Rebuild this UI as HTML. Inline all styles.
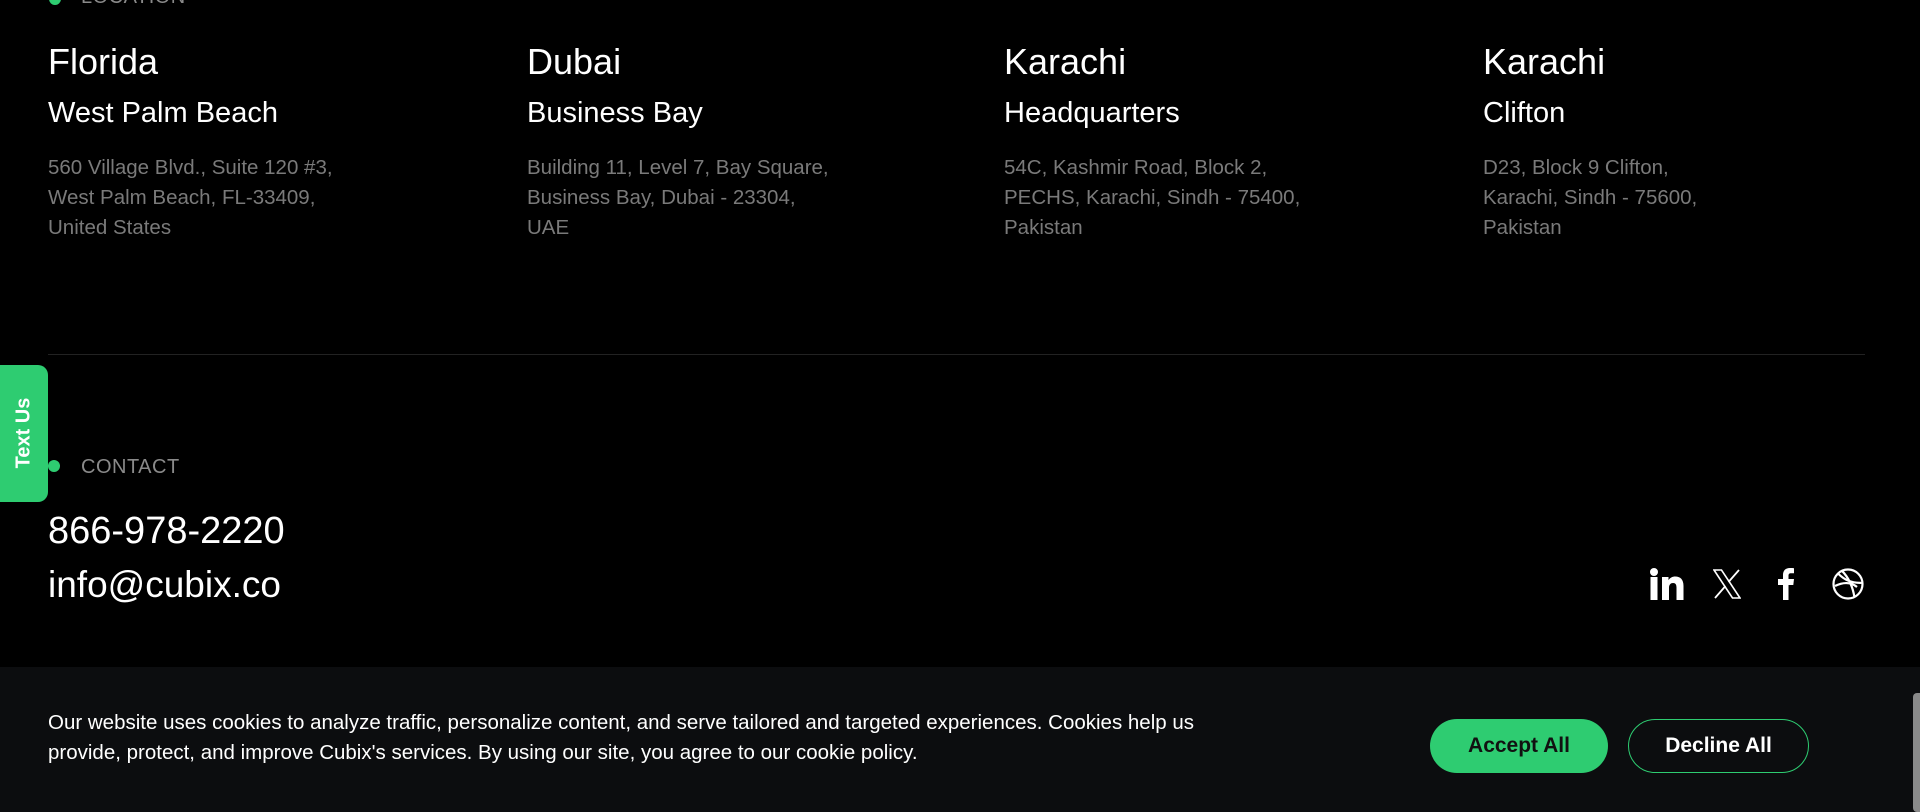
<!DOCTYPE html>
<html><head><meta charset="utf-8"><style>
*{margin:0;padding:0;box-sizing:border-box}
body{width:1920px;height:812px;background:#000;font-family:"Liberation Sans",sans-serif;color:#fff;position:relative;overflow:hidden}
.abs{position:absolute}
.lbl{font-size:20px;color:#8a8a8a;letter-spacing:.5px}
.dot{width:12px;height:12px;border-radius:50%;background:#2ecc71}
.col{position:absolute;top:39px}
.col h2{font-size:36px;font-weight:400;line-height:46px}
.col h3{font-size:29px;font-weight:400;line-height:40px;margin-top:8px}
.col p{font-size:20.5px;color:#7a7a7a;line-height:30px;margin-top:20px}
.btn{position:absolute;top:719px;height:54px;border-radius:27px;font-size:21px;font-weight:700;display:flex;align-items:center;justify-content:center}
</style></head><body>
<div class="abs dot" style="left:49px;top:-7px"></div>
<div class="abs lbl" style="left:81px;top:-14px">LOCATION</div>

<div class="col" style="left:48px"><h2>Florida</h2><h3>West Palm Beach</h3><p>560 Village Blvd., Suite 120 #3,<br>West Palm Beach, FL-33409,<br>United States</p></div>
<div class="col" style="left:527px"><h2>Dubai</h2><h3>Business Bay</h3><p>Building 11, Level 7, Bay Square,<br>Business Bay, Dubai - 23304,<br>UAE</p></div>
<div class="col" style="left:1004px"><h2>Karachi</h2><h3>Headquarters</h3><p>54C, Kashmir Road, Block 2,<br>PECHS, Karachi, Sindh - 75400,<br>Pakistan</p></div>
<div class="col" style="left:1483px"><h2>Karachi</h2><h3>Clifton</h3><p>D23, Block 9 Clifton,<br>Karachi, Sindh - 75600,<br>Pakistan</p></div>

<div class="abs" style="left:48px;top:354px;width:1817px;height:1px;background:#222"></div>

<div class="abs" style="left:0;top:365px;width:48px;height:137px;background:#2ecc71;border-radius:0 10px 10px 0"></div>
<div class="abs" style="left:24px;top:433px;transform:translate(-50%,-50%) rotate(-90deg);font-size:20px;font-weight:700;white-space:nowrap">Text Us</div>

<div class="abs dot" style="left:48px;top:460px"></div>
<div class="abs lbl" style="left:81px;top:456px">CONTACT</div>
<div class="abs" style="left:48px;top:507px;font-size:38px;line-height:48px">866-978-2220</div>
<div class="abs" style="left:48px;top:561px;font-size:37px;line-height:48px">info@cubix.co</div>

<svg class="abs" style="left:1650px;top:568px" width="34" height="32" viewBox="0 0 34 32"><rect x="0.5" y="9" width="7" height="23" fill="#fff"/><circle cx="4" cy="4" r="4" fill="#fff"/><path d="M12 9h6.5v3.2c1.4-2.4 3.8-3.7 6.8-3.7 5 0 8.2 3 8.2 9.4V32h-7V19.5c0-3-1.1-4.5-3.4-4.5-2.4 0-4.1 1.6-4.1 4.8V32h-7z" fill="#fff"/></svg>
<svg class="abs" style="left:1713px;top:569px" width="28" height="30" viewBox="0 0 28 30"><path d="M1 1h7.5L27 29h-7.5z" fill="none" stroke="#fff" stroke-width="1.6"/><path d="M26 1L15.5 13M2 29l10.5-12" stroke="#fff" stroke-width="1.8"/></svg>
<svg class="abs" style="left:1778px;top:568px" width="18" height="32" viewBox="0 0 18 32"><path d="M5 32V17H0v-6h5V7c0-4.6 2.7-7 6.8-7 2 0 3.5.1 4.2.2v5h-2.8c-2.3 0-2.7 1-2.7 2.6V11h5.5l-.7 6H10.5v15z" fill="#fff"/></svg>
<svg class="abs" style="left:1832px;top:568px" width="32" height="32" viewBox="0 0 32 32" fill="none" stroke="#fff" stroke-width="2.2"><circle cx="16" cy="16" r="14.5"/><path d="M6 5.5c6 6 13 10 24.5 9.3M3 18c8-4 16-4 22 1M10 2.8C17 10 21 20 22.5 29.5"/></svg>

<div class="abs" style="left:0;top:667px;width:1920px;height:145px;background:#0c0d0f"></div>
<div class="abs" style="left:48px;top:708px;font-size:20.5px;line-height:30px;width:1230px">Our website uses cookies to analyze traffic, personalize content, and serve tailored and targeted experiences. Cookies help us<br>provide, protect, and improve Cubix's services. By using our site, you agree to our cookie policy.</div>
<div class="btn" style="left:1430px;width:178px;background:#2ecc71;color:#111">Accept All</div>
<div class="btn" style="left:1628px;width:181px;border:1.5px solid #2ecc71;color:#fff">Decline All</div>
<div class="abs" style="left:1913px;top:693px;width:7px;height:119px;background:#8a8a8a;border-radius:4px 0 0 4px"></div>
</body></html>
